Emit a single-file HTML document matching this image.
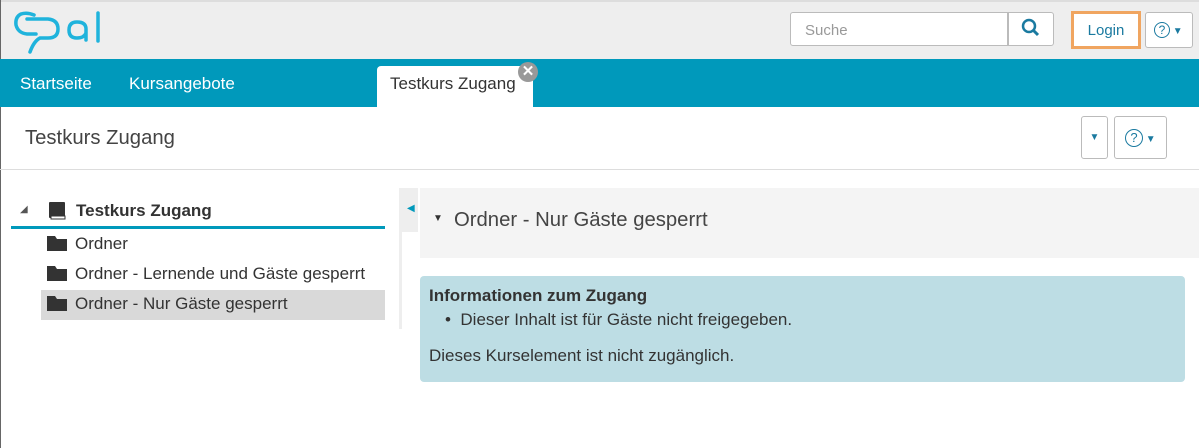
<!DOCTYPE html><html><head><meta charset="utf-8"><style>
body{margin:0;width:1199px;height:448px;position:relative;overflow:hidden;background:#fff;font-family:"Liberation Sans",sans-serif;color:#333}
.a{position:absolute}
.q{display:inline-block;width:16px;height:16px;border:1.5px solid #1a7aa0;border-radius:50%;box-sizing:border-box;font-size:12px;line-height:14px;text-align:center;vertical-align:middle}
.f{display:inline-block;width:20px;height:15px;background:#333;vertical-align:-2px;margin-right:8px;clip-path:polygon(0 0,40% 0,50% 20%,100% 20%,100% 100%,0 100%)}
</style></head><body>
<div class="a" style="left:0;top:0;width:1199px;height:59px;background:#eeeeee;border-top:2px solid #ddd;box-sizing:border-box"></div>
<div class="a" style="left:0;top:0;width:1px;height:448px;background:#666"></div>
<svg class="a" style="left:12px;top:8px" width="92" height="48" viewBox="0 0 92 48"><g fill="none" stroke="#1fb3dc" stroke-width="3.5" stroke-linecap="round"><path d="M22 7 Q15 4 9 6 Q3 9 4 17 Q6 25 15 26 L24 26"/><path d="M15 11 L36 11 Q46 12 46 21 Q46 30 36 30 L28 30 Q22 33 18 44"/><path d="M74 32 L74 21 Q74 14 65 14 Q57 14 57 22 Q57 30 65 30 Q72 30 74 25"/><path d="M86 5 L86 33"/></g></svg>
<div class="a" style="left:790px;top:12px;width:218px;height:34px;background:#fff;border:1px solid #bbb;box-sizing:border-box;border-radius:3px 0 0 3px;font-size:15px;color:#999;padding:9px 0 0 14px">Suche</div>
<div class="a" style="left:1008px;top:12px;width:46px;height:34px;background:#fff;border:1px solid #bbb;box-sizing:border-box;border-radius:0 3px 3px 0"><svg width="46" height="32"><circle cx="20" cy="13" r="6" fill="none" stroke="#1a7aa0" stroke-width="2.5"/><path d="M24 17 L29 22" stroke="#1a7aa0" stroke-width="3"/></svg></div>
<div class="a" style="left:1071px;top:11px;width:70px;height:38px;border:3px solid #f0a560;box-sizing:border-box;background:#fff;font-size:15px;color:#1a7aa0;text-align:center;line-height:34px">Login</div>
<div class="a" style="left:1145px;top:12px;width:48px;height:36px;border:1px solid #bbb;border-radius:3px;box-sizing:border-box;background:#fff;color:#1a7aa0;padding:8px 0 0 8px"><span class="q">?</span><span style="font-size:10px"> ▼</span></div>
<div class="a" style="left:0;top:59px;width:1199px;height:48px;background:#0099bb"></div>
<div class="a" style="left:20px;top:74px;color:#fff;font-size:17px">Startseite</div>
<div class="a" style="left:129px;top:74px;color:#fff;font-size:17px">Kursangebote</div>
<div class="a" style="left:377px;top:66px;width:156px;height:41px;background:#fff;border-radius:4px 4px 0 0"></div>
<div class="a" style="left:390px;top:74px;font-size:17px">Testkurs Zugang</div>
<div class="a" style="left:518px;top:62px;width:20px;height:20px;border-radius:50%;background:#999;color:#fff;font-size:15px;font-weight:bold;text-align:center;line-height:20px">✕</div>
<div class="a" style="left:25px;top:127px;font-size:20.3px;color:#444">Testkurs Zugang</div>
<div class="a" style="left:0;top:169px;width:1199px;height:1px;background:#ddd"></div>
<div class="a" style="left:1081px;top:116px;width:27px;height:43px;border:1px solid #bbb;border-radius:3px;box-sizing:border-box;color:#1a7aa0;font-size:10px;text-align:center;line-height:41px">▼</div>
<div class="a" style="left:1114px;top:116px;width:53px;height:43px;border:1px solid #bbb;border-radius:3px;box-sizing:border-box;color:#1a7aa0;padding:12px 0 0 10px"><span class="q" style="width:18px;height:18px;line-height:16px;font-size:13px">?</span><span style="font-size:10px"> ▼</span></div>
<div class="a" style="left:20px;top:204px;font-size:10px;color:#555">◢</div>
<svg class="a" style="left:48px;top:201px" width="18" height="20"><rect x="1" y="1" width="16" height="16" rx="1" fill="#333"/><rect x="3" y="15" width="14" height="3" fill="#fff" stroke="#333"/></svg>
<div class="a" style="left:76px;top:201px;font-size:17px;font-weight:bold">Testkurs Zugang</div>
<div class="a" style="left:11px;top:226px;width:374px;height:3px;background:#0099bb"></div>
<div class="a" style="left:41px;top:290px;width:344px;height:30px;background:#d9d9d9"></div>
<div class="a" style="left:47px;top:234px;font-size:17px;line-height:20px">
<div style="height:30px"><span class="f"></span>Ordner</div>
<div style="height:30px"><span class="f"></span>Ordner - Lernende und Gäste gesperrt</div>
<div style="height:30px"><span class="f"></span>Ordner - Nur Gäste gesperrt</div></div>
<div class="a" style="left:399px;top:188px;width:19px;height:44px;background:#eee"></div>
<div class="a" style="left:399px;top:232px;width:3px;height:97px;background:#eee"></div>
<div class="a" style="left:407px;top:203px;font-size:10px;color:#0099bb">◀</div>
<div class="a" style="left:420px;top:188px;width:779px;height:70px;background:#f4f4f4"></div>
<div class="a" style="left:433px;top:213px;font-size:10px">▼</div>
<div class="a" style="left:454px;top:209px;font-size:20.3px;color:#444">Ordner - Nur Gäste gesperrt</div>
<div class="a" style="left:420px;top:276px;width:765px;height:106px;background:#bddde4;border-radius:4px;font-size:17px">
<div style="position:absolute;left:9px;top:10px;font-weight:bold">Informationen zum Zugang</div>
<div style="position:absolute;left:25px;top:34px">•&nbsp;&nbsp;Dieser Inhalt ist für Gäste nicht freigegeben.</div>
<div style="position:absolute;left:9px;top:70px">Dieses Kurselement ist nicht zugänglich.</div></div>
</body></html>
